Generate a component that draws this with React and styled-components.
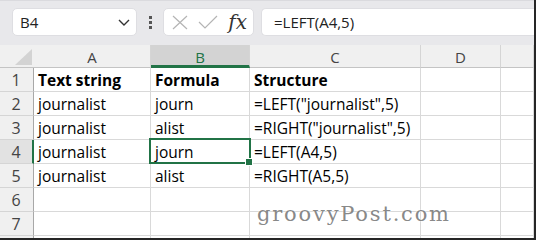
import React from 'react';
import styled, { createGlobalStyle } from 'styled-components';

const GREEN = '#217346';
const COLS = [34, 117, 99, 171, 80, 33];
const LETTERS = ['A', 'B', 'C', 'D', ''];
const DATA = [
  ['Text string', 'Formula', 'Structure', '', ''],
  ['journalist', 'journ', '=LEFT("journalist",5)', '', ''],
  ['journalist', 'alist', '=RIGHT("journalist",5)', '', ''],
  ['journalist', 'journ', '=LEFT(A4,5)', '', ''],
  ['journalist', 'alist', '=RIGHT(A5,5)', '', ''],
  ['', '', '', '', ''],
  ['', '', '', '', ''],
];

const Global = createGlobalStyle`
  html, body { margin: 0; padding: 0; background: #fff; }
  body { font-family: "Open Sans", "Noto Sans", sans-serif; }
`;

const Frame = styled.div`
  width: 536px;
  height: 240px;
  box-sizing: border-box;
  border-right: 2px solid #262626;
  border-bottom: 2px solid #262626;
  overflow: hidden;
  display: flex;
  flex-direction: column;
  position: relative;
  background: #fff;
`;

const Toolbar = styled.div`
  height: 45px;
  flex: none;
  box-sizing: border-box;
  border-top: 1px solid #dadade;
  background: #e8e8eb;
  display: flex;
  align-items: flex-start;
  padding: 7px 0 0 12px;
`;

const Box = styled.div`
  height: 28px;
  box-sizing: border-box;
  background: #fff;
  border: 1px solid #dedee2;
  border-radius: 5px;
  display: flex;
  align-items: center;
`;

const NameBox = styled(Box)`
  width: 125px;
  padding: 0 6px 0 7px;
  justify-content: space-between;
  font-size: 15px;
  color: #222;
`;

const Dots = styled.div`
  width: 26px;
  height: 28px;
  display: flex;
  flex-direction: column;
  align-items: center;
  justify-content: center;
  gap: 2px;
  span {
    width: 3px;
    height: 3px;
    background: #555;
  }
`;

const IconBox = styled(Box)`
  width: 91px;
  padding: 0 6px 0 8px;
  justify-content: space-between;
`;

const Fx = styled.span`
  font-family: "DejaVu Serif", "Liberation Serif", serif;
  font-style: italic;
  font-size: 20px;
  color: #333;
  line-height: 1;
`;

const FormulaBox = styled(Box)`
  flex: 1;
  margin-left: 7px;
  border-right: none;
  border-radius: 5px 0 0 5px;
  padding-left: 12px;
  font-size: 15px;
  color: #222;
`;

const Grid = styled.div`
  display: grid;
  grid-template-columns: ${COLS.map((c) => c + 'px').join(' ')};
  grid-auto-rows: 24px;
  grid-template-rows: 23px;
`;

const Corner = styled.div`
  background: #f0f0f0;
  border-bottom: 1px solid #c4c4c4;
  position: relative;
  &::after {
    content: '';
    position: absolute;
    right: 2px;
    bottom: 2px;
    border-style: solid;
    border-width: 0 0 16px 17px;
    border-color: transparent transparent #d3d3d3 transparent;
  }
`;

const ColHead = styled.div`
  background: ${(p) => (p.$active ? '#d3d3d3' : '#f0f0f0')};
  color: ${(p) => (p.$active ? GREEN : '#444')};
  border-right: 1px solid #d5d5d5;
  border-bottom: ${(p) => (p.$active ? `3px solid ${GREEN}` : '1px solid #c4c4c4')};
  box-sizing: border-box;
  display: flex;
  align-items: center;
  justify-content: center;
  padding-top: ${(p) => (p.$active ? '4px' : '2px')};
  font-size: 15px;
`;

const RowHead = styled.div`
  background: ${(p) => (p.$active ? '#e2e2e2' : '#f0f0f0')};
  border-right: ${(p) => (p.$active ? `2px solid ${GREEN}` : '1px solid #a8a8a8')};
  border-bottom: 1px solid #d5d5d5;
  box-sizing: border-box;
  display: flex;
  align-items: center;
  justify-content: center;
  padding: 1px ${(p) => (p.$active ? '0' : '1px')} 0 0;
  font-size: 16px;
  color: #444;
`;

const Cell = styled.div`
  border-right: 1px solid #d9d9d9;
  border-bottom: 1px solid #d9d9d9;
  box-sizing: border-box;
  display: flex;
  align-items: flex-end;
  padding: 0 0 1px 4px;
  font-size: 15.5px;
  line-height: 20px;
  font-weight: ${(p) => (p.$bold ? 700 : 400)};
  color: #000;
  white-space: nowrap;
  position: relative;
  &::after {
    content: '';
    display: ${(p) => (p.$selected ? 'block' : 'none')};
    position: absolute;
    left: -2px;
    top: -2px;
    right: -2px;
    bottom: -1px;
    border: 2px solid ${GREEN};
  }
`;

const Handle = styled.span`
  position: absolute;
  right: -4px;
  bottom: -3px;
  width: 6px;
  height: 6px;
  background: ${GREEN};
  border: 1px solid #fff;
  z-index: 2;
`;

const Watermark = styled.div`
  position: absolute;
  left: 257px;
  top: 204px;
  font-family: "DejaVu Serif", "Liberation Serif", serif;
  font-size: 21px;
  letter-spacing: 1.8px;
  line-height: 1;
  color: rgba(105, 105, 105, 0.8);
  text-shadow: 0 0 2px #fff;
  pointer-events: none;
`;

function Chevron() {
  return (
    <svg width="12" height="7" viewBox="0 0 12 7">
      <polyline points="1,1 6,6 11,1" fill="none" stroke="#333" strokeWidth="1.4" />
    </svg>
  );
}

function Cross() {
  return (
    <svg width="16" height="15" viewBox="0 0 16 15">
      <path d="M1 1 L15 14 M15 1 L1 14" stroke="#b4b4b4" strokeWidth="1.2" fill="none" />
    </svg>
  );
}

function Check() {
  return (
    <svg width="20" height="14" viewBox="0 0 20 14">
      <polyline points="1,7 7,13 19,1" fill="none" stroke="#b4b4b4" strokeWidth="1.2" />
    </svg>
  );
}

export default function App() {
  return (
    <Frame>
      <Global />
      <Toolbar>
        <NameBox>
          <span>B4</span>
          <Chevron />
        </NameBox>
        <Dots>
          <span />
          <span />
          <span />
        </Dots>
        <IconBox>
          <Cross />
          <Check />
          <Fx>fx</Fx>
        </IconBox>
        <FormulaBox>=LEFT(A4,5)</FormulaBox>
      </Toolbar>
      <Grid>
        <Corner />
        {LETTERS.map((l, i) => (
          <ColHead key={i} $active={l === 'B'}>{l}</ColHead>
        ))}
        {DATA.map((row, r) => (
          <React.Fragment key={r}>
            <RowHead $active={r === 3}>{r + 1}</RowHead>
            {row.map((v, c) => {
              const sel = r === 3 && c === 1;
              return (
                <Cell key={c} $bold={r === 0} $selected={sel}>
                  {v}
                  {sel && <Handle />}
                </Cell>
              );
            })}
          </React.Fragment>
        ))}
        <RowHead />
        {LETTERS.map((l, i) => (
          <Cell key={'r8' + i} />
        ))}
      </Grid>
      <Watermark>groovyPost.com</Watermark>
    </Frame>
  );
}
